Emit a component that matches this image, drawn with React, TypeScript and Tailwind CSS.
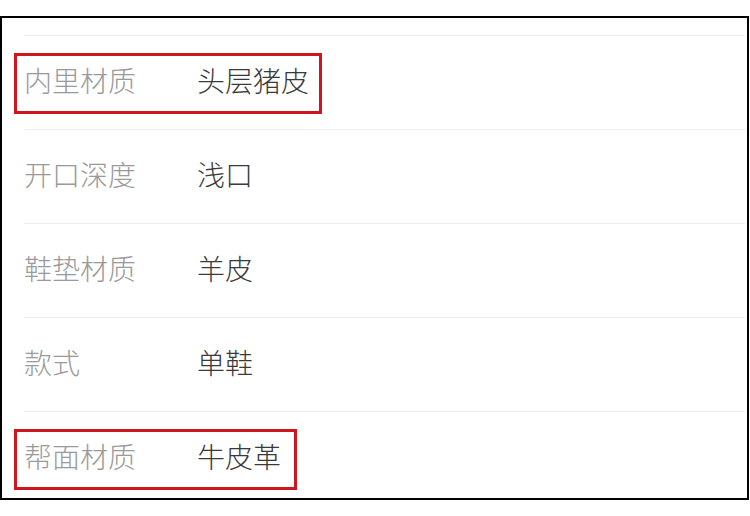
const rows: { label: string; value: string; mark?: number }[] = [
  { label: "内里材质", value: "头层猪皮", mark: 308 },
  { label: "开口深度", value: "浅口" },
  { label: "鞋垫材质", value: "羊皮" },
  { label: "款式", value: "单鞋" },
  { label: "帮面材质", value: "牛皮革", mark: 283 },
];

export default function App() {
  return (
    <div className="h-[516px] w-[750px] bg-white pt-[16px]" style={{ fontFamily: '"Noto Sans CJK SC", "Noto Sans", sans-serif' }}>
      <div className="h-[484px] w-[749px] overflow-hidden border-2 border-black bg-white">
        <div className="h-[17px]" />
        {rows.map((r) => (
          <div key={r.label} className="relative ml-[22px] mr-[2px] flex h-[94px] items-center border-t border-[#ececec] pb-[5px] text-[28px] font-light leading-none">
            <span className="w-[173px] text-[#9a9a9a]">{r.label}</span>
            <span className="text-[#3a3a3a]">{r.value}</span>
            {r.mark && (
              <div className="absolute left-[-10px] top-[17px] h-[61px] border-[3px] border-[#d0161d]" style={{ width: r.mark }} />
            )}
          </div>
        ))}
      </div>
    </div>
  );
}
